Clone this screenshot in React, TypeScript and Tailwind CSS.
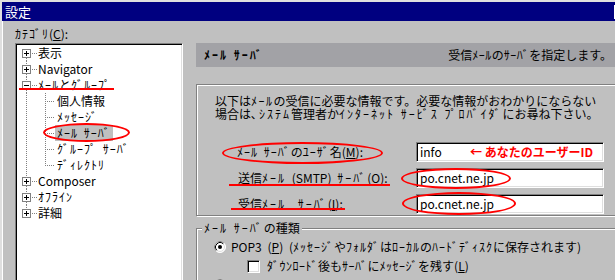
import React from 'react';

type Node = {
  label: string;
  level: 0 | 1;
  box?: 'plus' | 'minus';
  first?: boolean;
  last?: boolean;
  lastChild?: boolean;
  selected?: boolean;
};

const tree: Node[] = [
  { label: '表示', level: 0, box: 'plus', first: true },
  { label: 'Navigator', level: 0, box: 'plus' },
  { label: 'ﾒｰﾙとｸﾞﾙｰﾌﾟ', level: 0, box: 'minus' },
  { label: '個人情報', level: 1 },
  { label: 'ﾒｯｾｰｼﾞ', level: 1 },
  { label: 'ﾒｰﾙ ｻｰﾊﾞ', level: 1, selected: true },
  { label: 'ｸﾞﾙｰﾌﾟ ｻｰﾊﾞ', level: 1 },
  { label: 'ﾃﾞｨﾚｸﾄﾘ', level: 1, lastChild: true },
  { label: 'Composer', level: 0, box: 'plus' },
  { label: 'ｵﾌﾗｲﾝ', level: 0, box: 'plus' },
  { label: '詳細', level: 0, box: 'plus', last: true },
];

// half-width katakana are drawn wider in the old bitmap font, so space them out a bit
function K({ t, k = 'tracking-[1.5px]' }: { t: string; k?: string }) {
  const parts = t.split(/([\uFF61-\uFF9F]+)/);
  return (
    <>
      {parts.map((p, i) =>
        /[\uFF61-\uFF9F]/.test(p) ? (
          <span key={i} className={k}>
            {p}
          </span>
        ) : (
          p
        )
      )}
    </>
  );
}

function Connector({ node }: { node: Node }) {
  const dot = { stroke: '#808080', strokeDasharray: '1 1', fill: 'none' };
  if (node.level === 1) {
    return (
      <svg width="38" height="16" className="shrink-0">
        <line x1="9.5" y1="0" x2="9.5" y2="16" {...dot} />
        <line x1="28.5" y1="0" x2="28.5" y2={node.lastChild ? 9 : 16} {...dot} />
        <line x1="30" y1="8.5" x2="38" y2="8.5" {...dot} />
      </svg>
    );
  }
  return (
    <svg width="21" height="16" className="shrink-0">
      {!node.first && <line x1="9.5" y1="0" x2="9.5" y2="4" {...dot} />}
      {!node.last && <line x1="9.5" y1="13" x2="9.5" y2="16" {...dot} />}
      <line x1="15" y1="8.5" x2="21" y2="8.5" {...dot} />
      <rect x="5.5" y="4.5" width="8" height="8" fill="#fff" stroke="#808080" />
      <line x1="7" y1="8.5" x2="12" y2="8.5" stroke="#000" />
      {node.box === 'plus' && <line x1="9.5" y1="6" x2="9.5" y2="11" stroke="#000" />}
    </svg>
  );
}

function Radio({ checked }: { checked?: boolean }) {
  return (
    <svg width="12" height="12" className="shrink-0">
      <circle cx="6" cy="6" r="5.5" fill="#fff" stroke="#fff" />
      <path d="M2.11 9.89 A5.5 5.5 0 0 1 9.89 2.11" stroke="#808080" fill="none" />
      <circle cx="6" cy="6" r="4.5" fill="none" stroke="#dfdfdf" />
      <path d="M2.82 9.18 A4.5 4.5 0 0 1 9.18 2.82" stroke="#000" fill="none" />
      {checked && <circle cx="6" cy="6" r="2" fill="#000" />}
    </svg>
  );
}

function Field({ children }: { children: React.ReactNode }) {
  return (
    <div className="w-[188px] h-[20px] bg-white border border-t-[#808080] border-l-[#808080] border-r-white border-b-white shadow-[inset_1px_1px_0_#000,inset_-1px_-1px_0_#dfdfdf] flex items-center pl-[3px] whitespace-nowrap">
      {children}
    </div>
  );
}

const ring = 'absolute border-2 border-[#ff0000] rounded-[50%]';
const bar = 'absolute h-[2px] bg-[#ff0000]';

export default function App() {
  return (
    <div className="w-[615px] h-[280px] overflow-hidden bg-[#c0c0c0] text-[12px] text-black font-['Noto_Sans_CJK_JP','Liberation_Sans',sans-serif] [word-spacing:3px] border-t-2 border-l-2 border-t-[#dfdfdf] border-l-[#dfdfdf]">
      {/* title bar */}
      <div className="w-[630px] h-[19px] bg-[#000080] flex items-center pl-[3px] pr-[2px]">
        <span className="text-white text-[13px] leading-[19px]">設定</span>
        <div className="ml-auto w-[16px] h-[14px] bg-[#c0c0c0] border-t border-l border-white" />
      </div>

      <div className="flex items-start border-l border-white pl-[12px] h-[259px]">
        {/* categories */}
        <div className="w-[168px] shrink-0">
          <div className="mt-[5px] h-[16px] leading-[16px] whitespace-nowrap">
            <K t="ｶﾃｺﾞﾘ" k="tracking-[1px]" />(<span className="underline">C</span>):
          </div>
          <div className="mt-[1px] h-[240px] bg-white border border-t-[#808080] border-l-[#808080] border-r-white border-b-white shadow-[inset_1px_1px_0_#000,inset_-1px_-1px_0_#dfdfdf] p-[1px]">
            <div className="relative">
              {tree.map((n) => (
                <div key={n.label} className="flex items-center h-[16px] leading-[16px] whitespace-nowrap">
                  <Connector node={n} />
                  <span className={n.level === 1 ? 'px-[2px]' + (n.selected ? ' bg-[#c0c0c0]' : '') : ''}>
                    <K t={n.label} k="tracking-[1px]" />
                  </span>
                </div>
              ))}
              <div className={bar + ' left-[2px] top-[43px] w-[95px]'} />
              <div className={ring + ' left-[26px] top-[78px] w-[87px] h-[19px]'} />
            </div>
          </div>
        </div>

        {/* settings */}
        <div className="relative ml-[13px] pt-[22px] w-[440px] shrink-0">
          <div className="w-[419px] h-[24px] bg-[#a2a2a6] flex items-center justify-between pl-[8px] pr-[3px] whitespace-nowrap">
            <span className="font-bold">
              <K t="ﾒｰﾙ ｻｰﾊﾞ" k="tracking-[2px]" />
            </span>
            <span>
              <K t="受信ﾒｰﾙのｻｰﾊﾞを指定します。" k="tracking-[0.5px]" />
            </span>
          </div>

          <div className="mt-[17px] border border-[#808080] shadow-[inset_1px_1px_0_#fff,1px_1px_0_#fff] pt-[9px] pb-[1px]">
            <div className="pl-[18px] leading-[13px] whitespace-nowrap">
              <div>
                <K t="以下はﾒｰﾙの受信に必要な情報です。必要な情報がおわかりにならない" />
              </div>
              <div>
                <K t="場合は､ｼｽﾃﾑ管理者かｲﾝﾀｰﾈｯﾄ ｻｰﾋﾞｽ ﾌﾟﾛﾊﾞｲﾀﾞにお尋ね下さい。" k="tracking-[2px]" />
              </div>
            </div>
            <div className="mt-[22px] flex flex-col gap-[6px]">
              <div className="flex items-center h-[20px] whitespace-nowrap">
                <span className="w-[219px] pl-[40px]">
                  <K t="ﾒｰﾙ ｻｰﾊﾞのﾕｰｻﾞ名" k="tracking-[1px]" />(<span className="underline">M</span>):
                </span>
                <Field>
                  <span className="w-[50px]">info</span>
                  <span className="text-[#ff0000] font-bold [word-spacing:0px]">←&nbsp;あなたのユーザーID</span>
                </Field>
              </div>
              <div className="flex items-center h-[20px] whitespace-nowrap">
                <span className="w-[219px] pl-[41px]">
                  <K t="送信ﾒｰﾙ (SMTP) ｻｰﾊﾞ" k="tracking-[2px]" />(<span className="underline">O</span>):
                </span>
                <Field>po.cnet.ne.jp</Field>
              </div>
              <div className="flex items-center h-[20px] whitespace-nowrap">
                <span className="w-[219px] pl-[41px] [word-spacing:9px]">
                  <K t="受信ﾒｰﾙ ｻｰﾊﾞ" k="tracking-[2px]" />(<span className="underline">I</span>):
                </span>
                <Field>po.cnet.ne.jp</Field>
              </div>
            </div>
          </div>

          <div className="mt-[12px] border border-[#808080] shadow-[inset_1px_1px_0_#fff,1px_1px_0_#fff] h-[80px]">
            <div className="-mt-[9px] ml-[5px] w-fit px-[2px] h-[16px] leading-[16px] bg-[#c0c0c0] whitespace-nowrap">
              <K t="ﾒｰﾙ ｻｰﾊﾞの種類" k="tracking-[2px]" />
            </div>
            <div className="mt-[3px] pl-[17px] flex items-center gap-[5px] h-[16px] whitespace-nowrap">
              <Radio checked />
              <span>
                POP3 (<span className="underline">P</span>){' '}
                <K t="(ﾒｯｾｰｼﾞやﾌｫﾙﾀﾞはﾛｰｶﾙのﾊｰﾄﾞﾃﾞｨｽｸに保存されます)" k="tracking-[1px]" />
              </span>
            </div>
            <div className="mt-[3px] pl-[50px] flex items-center gap-[7px] h-[16px] whitespace-nowrap">
              <div className="w-[13px] h-[13px] bg-white border border-t-[#808080] border-l-[#808080] border-r-white border-b-white shadow-[inset_1px_1px_0_#000,inset_-1px_-1px_0_#dfdfdf]" />
              <span>
                <K t="ﾀﾞｳﾝﾛｰﾄﾞ後もｻｰﾊﾞにﾒｯｾｰｼﾞを残す" k="tracking-[0.5px]" />(<span className="underline">L</span>)
              </span>
            </div>
            <div className="mt-[3px] pl-[17px] flex items-center h-[16px]">
              <Radio />
            </div>
          </div>

          {/* annotations */}
          <div className={ring + ' left-[26px] top-[121px] w-[161px] h-[22px]'} />
          <div className={bar + ' left-[33px] top-[163px] w-[161px]'} />
          <div className={bar + ' left-[35px] top-[187px] w-[114px]'} />
          <div className={ring + ' left-[205px] top-[147px] w-[110px] h-[21px]'} />
          <div className={ring + ' left-[206px] top-[171px] w-[114px] h-[23px]'} />
        </div>
      </div>
    </div>
  );
}
